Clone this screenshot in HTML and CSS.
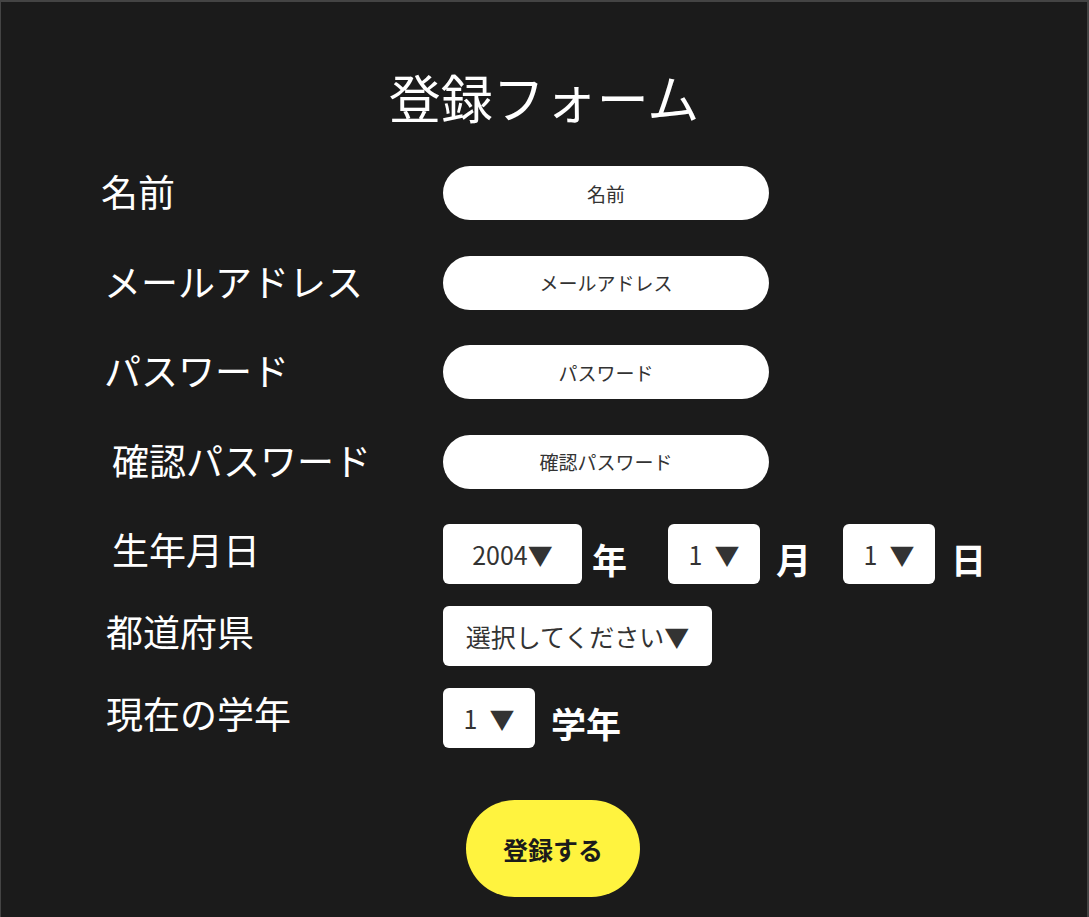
FILE: index.html
```html
<!DOCTYPE html>
<html lang="ja">
<head>
<meta charset="utf-8">
<title>登録フォーム</title>
<link rel="stylesheet" href="styles.css">
</head>
<body>
<main class="page">
  <h1 class="title">登録フォーム</h1>
  <form class="form">
    <div class="row row-text">
      <label class="label shift-l">名前</label>
      <div class="pill">名前</div>
    </div>
    <div class="row row-text">
      <label class="label">メールアドレス</label>
      <div class="pill">メールアドレス</div>
    </div>
    <div class="row row-text">
      <label class="label">パスワード</label>
      <div class="pill">パスワード</div>
    </div>
    <div class="row row-text">
      <label class="label shift-r">確認パスワード</label>
      <div class="pill">確認パスワード</div>
    </div>
    <div class="row row-select">
      <label class="label shift-r">生年月日</label>
      <div class="sel sel-year">2004▼</div><span class="unit unit-y">年</span>
      <div class="sel sel-small">1<span class="arrow">▼</span></div><span class="unit unit-m">月</span>
      <div class="sel sel-small">1<span class="arrow">▼</span></div><span class="unit">日</span>
    </div>
    <div class="row row-select">
      <label class="label shift-m">都道府県</label>
      <div class="sel sel-pref">選択してください▼</div>
    </div>
    <div class="row row-select row-last">
      <label class="label shift-m">現在の学年</label>
      <div class="sel sel-small">1<span class="arrow">▼</span></div><span class="unit">学年</span>
    </div>
    <div class="actions">
      <button type="button" class="submit">登録する</button>
    </div>
  </form>
</main>
</body>
</html>
```

FILE: styles.css
```css
html, body {
  margin: 0;
  padding: 0;
}
body {
  background: #1b1b1b;
  font-family: "Noto Sans CJK JP", "Noto Sans", sans-serif;
  color: #ffffff;
}
.page {
  box-sizing: border-box;
  width: 1089px;
  height: 917px;
  border-top: 2px solid #444;
  border-left: 1px solid #444;
  border-right: 2px solid #444;
  padding-top: 64px;
  overflow: hidden;
}
.title {
  margin: 0;
  text-align: center;
  font-size: 52px;
  font-weight: 400;
  line-height: 62px;
}
.form {
  margin-top: 38px;
  display: flex;
  flex-direction: column;
}
.row {
  display: flex;
  align-items: center;
}
.row-text {
  height: 54px;
  margin-bottom: 35.5px;
}
.row-select {
  height: 60px;
  margin-bottom: 22px;
}
.row-last {
  margin-bottom: 52px;
}
.label {
  box-sizing: border-box;
  width: 442px;
  padding-left: 103px;
  padding-bottom: 4px;
  font-size: 37px;
  line-height: 44px;
  white-space: nowrap;
}
.row-select .label {
  padding-bottom: 11px;
}
.shift-l { padding-left: 100px; }
.row .shift-r { padding-left: 111px; }
.row .shift-m { padding-left: 105px; }
.pill {
  box-sizing: border-box;
  width: 326px;
  height: 54px;
  border-radius: 27px;
  background: #fff;
  color: #333;
  font-size: 19px;
  display: flex;
  align-items: center;
  justify-content: center;
}
.sel {
  box-sizing: border-box;
  height: 60px;
  border-radius: 6px;
  background: #fff;
  color: #333;
  font-size: 25px;
  display: flex;
  align-items: center;
  justify-content: center;
  white-space: nowrap;
  margin-right: 16px;
}
.arrow {
  margin-left: 12px;
}
.sel-year { width: 139px; margin-right: 10px; }
.sel-small { width: 92px; }
.sel-pref { width: 269px; }
.unit {
  font-size: 35px;
  font-weight: 700;
  margin-right: 38px;
  padding-top: 8px;
}
.unit-y { margin-right: 41px; }
.unit-m { margin-right: 32px; }
.actions {
  display: flex;
  padding-left: 465px;
}
.submit {
  width: 174px;
  height: 97px;
  border: none;
  border-radius: 49px;
  background: #fff33f;
  color: #1b1b1b;
  font-family: "Noto Sans CJK JP", "Noto Sans", sans-serif;
  font-size: 25px;
  font-weight: 700;
  padding: 0;
}
```
